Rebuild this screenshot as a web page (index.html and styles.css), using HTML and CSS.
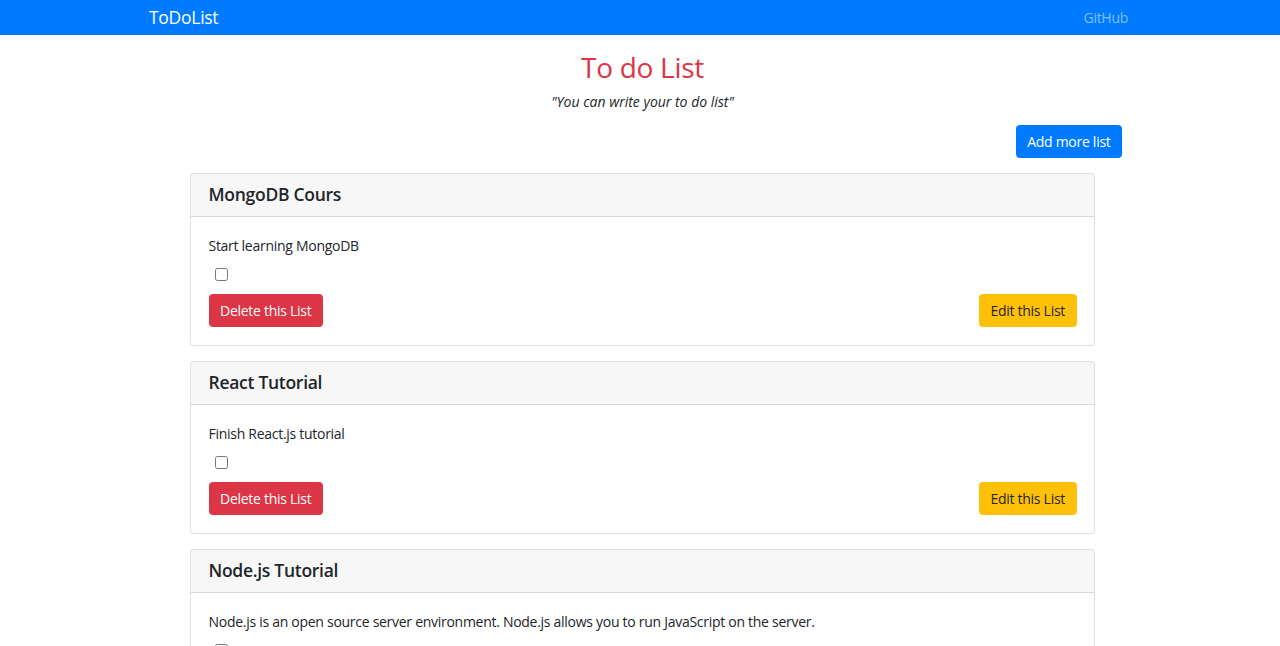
FILE: index.html
```html
<!DOCTYPE html>
<html lang="en">
<head>
  <meta charset="UTF-8">
  <meta name="viewport" content="width=device-width, initial-scale=1.0">
  <title>ToDoList</title>
  <link rel="stylesheet" href="styles.css">
</head>
<body>
  <nav class="navbar">
    <a class="navbar-brand" href="#">ToDoList</a>
    <a class="nav-link" href="#">GitHub</a>
  </nav>

  <main class="container">
    <h2 class="page-title">To do List</h2>
    <p class="subtitle"><em>"You can write your to do list"</em></p>

    <div class="toolbar">
      <button class="btn btn-primary">Add more list</button>
    </div>

    <div class="card">
      <div class="card-header">
        <h5>MongoDB Cours</h5>
      </div>
      <div class="card-body">
        <p>Start learning MongoDB</p>
        <div class="check"><input type="checkbox"></div>
        <div class="card-actions">
          <button class="btn btn-danger">Delete this List</button>
          <button class="btn btn-warning">Edit this List</button>
        </div>
      </div>
    </div>

    <div class="card">
      <div class="card-header">
        <h5>React Tutorial</h5>
      </div>
      <div class="card-body">
        <p>Finish React.js tutorial</p>
        <div class="check"><input type="checkbox"></div>
        <div class="card-actions">
          <button class="btn btn-danger">Delete this List</button>
          <button class="btn btn-warning">Edit this List</button>
        </div>
      </div>
    </div>

    <div class="card">
      <div class="card-header">
        <h5>Node.js Tutorial</h5>
      </div>
      <div class="card-body">
        <p>Node.js is an open source server environment. Node.js allows you to run JavaScript on the server.</p>
        <div class="check"><input type="checkbox"></div>
        <div class="card-actions">
          <button class="btn btn-danger">Delete this List</button>
          <button class="btn btn-warning">Edit this List</button>
        </div>
      </div>
    </div>
  </main>
</body>
</html>
```

FILE: styles.css
```css
body {
  margin: 0;
  font-family: "Open Sans", "Noto Sans", sans-serif;
  font-size: 14px;
  line-height: 1.5;
  letter-spacing: -0.28px;
  color: #212529;
  background-color: #fff;
}

a {
  text-decoration: none;
}

.navbar {
  display: flex;
  align-items: center;
  justify-content: space-between;
  height: 35px;
  padding: 0 152px 0 149px;
  background-color: #007bff;
}

.navbar-brand {
  color: #fff;
  font-size: 17.5px;
  line-height: 1;
}

.nav-link {
  color: rgba(255, 255, 255, 0.5);
  font-size: 14px;
}

.container {
  width: 905px;
  margin: 0 auto;
  padding-left: 5px;
}

.page-title {
  margin: 16px 0 0;
  text-align: center;
  color: #dc3545;
  font-size: 28px;
  font-weight: 500;
  line-height: 1.2;
}

.subtitle {
  margin: 6px 0 0;
  text-align: center;
  font-size: 14px;
  letter-spacing: 0;
}

.toolbar {
  display: flex;
  justify-content: flex-end;
  margin: 13px -27px 15px 0;
}

.btn {
  display: inline-block;
  padding: 5px 10.5px;
  font-family: inherit;
  font-size: 14px;
  line-height: 1.5;
  letter-spacing: inherit;
  border: 1px solid transparent;
  border-radius: 3.5px;
  cursor: pointer;
}

.btn-primary {
  background-color: #007bff;
  border-color: #007bff;
  color: #fff;
}

.btn-danger {
  background-color: #dc3545;
  border-color: #dc3545;
  color: #fff;
}

.btn-warning {
  background-color: #ffc107;
  border-color: #ffc107;
  color: #212529;
}

.card {
  margin-bottom: 15px;
  border: 1px solid rgba(0, 0, 0, 0.125);
  border-radius: 3.5px;
}

.card-header {
  padding: 10.5px 17.5px;
  background-color: rgba(0, 0, 0, 0.03);
  border-bottom: 1px solid rgba(0, 0, 0, 0.125);
}

.card-header h5 {
  margin: 0;
  font-size: 17.5px;
  font-weight: 600;
  line-height: 1.2;
}

.card-body {
  padding: 18px 17.5px 17.5px;
}

.card-body p {
  margin: 0;
}

.check {
  height: 38.5px;
  display: flex;
  align-items: center;
}

.check input {
  margin: 0 0 0 6px;
  width: 13px;
  height: 13px;
}

.card-actions {
  display: flex;
  justify-content: space-between;
}
```
